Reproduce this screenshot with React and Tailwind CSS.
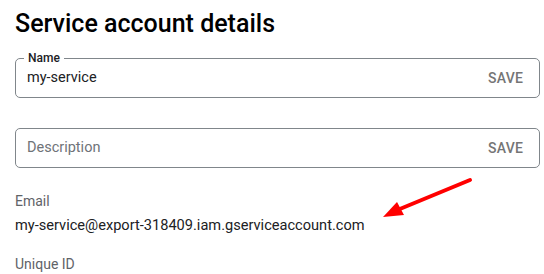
export default function App() {
  return (
    <div className="relative h-[274px] w-[544px] overflow-hidden bg-white font-['Roboto',sans-serif] text-[#202124]">
      <div className="pl-[15px] pr-[4px] pt-[9px]">
        {/* Header */}
        <h1 className="text-[25px] font-medium leading-[30px] text-black">Service account details</h1>

        {/* Name field */}
        <div className="relative mt-[19px] flex h-[40px] items-center justify-between rounded-[5px] border border-[#80868b] pl-[11px] pr-[16px]">
          <span className="absolute -top-[8px] left-[8px] bg-white px-[4px] text-[12px] font-medium leading-[14px] text-[#202124]">
            Name
          </span>
          <span className="text-[14.5px] leading-[20px] text-[#202124]">my-service</span>
          <span className="text-[14px] font-medium leading-[20px] tracking-[0.2px] text-[#757575]">SAVE</span>
        </div>

        {/* Description field */}
        <div className="mt-[30px] flex h-[40px] items-center justify-between rounded-[5px] border border-[#80868b] pl-[11px] pr-[16px]">
          <span className="text-[14.5px] leading-[20px] text-[#6f7378]">Description</span>
          <span className="text-[14px] font-medium leading-[20px] tracking-[0.2px] text-[#757575]">SAVE</span>
        </div>

        {/* Details */}
        <div className="mt-[23px]">
          <div className="text-[14px] leading-[20px] text-[#5f6368]">Email</div>
          <div className="mt-[4px] text-[14.6px] leading-[20px] text-[#202124]">
            my-service@export-318409.iam.gserviceaccount.com
          </div>
          <div className="mt-[19px] text-[14px] leading-[20px] text-[#5f6368]">Unique ID</div>
        </div>
      </div>

      {/* Annotation arrow */}
      <svg className="absolute left-0 top-0" width="544" height="274" viewBox="0 0 544 274">
        <line x1="470" y1="180" x2="395" y2="211" stroke="#ff0000" strokeWidth="4" strokeLinecap="round" />
        <polygon points="383,217 397,202 404,215" fill="#ff0000" />
      </svg>
    </div>
  );
}
